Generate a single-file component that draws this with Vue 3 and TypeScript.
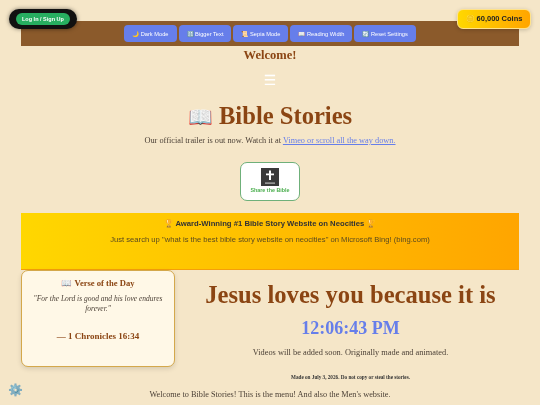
<script setup lang="ts">
import { ref } from 'vue'

const navButtons = ref([
  { icon: '🌙', label: 'Dark Mode' },
  { icon: '🔠', label: 'Bigger Text' },
  { icon: '📜', label: 'Sepia Mode' },
  { icon: '📖', label: 'Reading Width' },
  { icon: '🔄', label: 'Reset Settings' }
])
const clock = ref('12:06:43 PM')
</script>

<template>
  <div class="page">
    <a class="login"><span>Log In / Sign Up</span></a>
    <div class="coins"><span class="coin">🪙</span> 60,000 Coins</div>

    <nav class="nav">
      <button v-for="b in navButtons" :key="b.label" class="nav-btn">{{ b.icon }} {{ b.label }}</button>
    </nav>

    <h3 class="welcome">Welcome!</h3>
    <div class="burger">☰</div>

    <h1 class="title"><span class="book">📖</span> Bible Stories</h1>
    <p class="trailer">Our official trailer is out now. Watch it at <a href="#">Vimeo or scroll all the way down.</a></p>

    <div class="share-wrap">
      <div class="share">
        <svg class="bible" viewBox="0 0 18 18" width="18" height="18">
          <rect width="18" height="18" fill="#3a3a3a" />
          <path d="M8 2.5h2v3h3v1.8h-3V12H8V7.3H5V5.5h3z" fill="#fff" />
          <rect x="4" y="14.5" width="10" height="1.2" fill="#bbb" />
        </svg>
        <span>Share the Bible</span>
      </div>
    </div>

    <section class="award">
      <div class="award-title">🏆 Award-Winning #1 Bible Story Website on Neocities 🏆</div>
      <div class="award-sub">Just search up "what is the best bible story website on neocities" on Microsoft Bing! (bing.com)</div>
    </section>

    <div class="columns">
      <aside class="verse">
        <h4>📖 Verse of the Day</h4>
        <p class="quote">"For the Lord is good and his love endures forever."</p>
        <p class="ref">— 1 Chronicles 16:34</p>
      </aside>
      <div class="main">
        <h2>Jesus loves you because it is</h2>
        <div class="clock">{{ clock }}</div>
        <p class="videos">Videos will be added soon. Originally made and animated.</p>
        <p class="made">Made on July 3, 2026. Do not copy or steal the stories.</p>
      </div>
    </div>

    <p class="menu-line">Welcome to Bible Stories! This is the menu! And also the Men's website.</p>

    <div class="gear">⚙️</div>
  </div>
</template>

<style scoped>
.page {
  position: relative;
  height: 405px;
  overflow: hidden;
  box-sizing: border-box;
  padding: 21px 21px 0;
  background: #f5e6c8;
  font-family: "Liberation Serif", serif;
  color: #4a3f35;
  text-align: center;
  filter: blur(0.35px);
}

.login {
  position: absolute;
  left: 9px;
  top: 9px;
  background: #111;
  border-radius: 20px;
  padding: 4px 7px;
  box-shadow: 0 0 4px rgba(0, 0, 0, 0.5);
  line-height: 0;
}

.login span {
  display: block;
  background: #27ae60;
  color: #fff;
  border-radius: 12px;
  padding: 0 6px;
  font: bold 5.5px/12px "Liberation Sans", sans-serif;
}

.coins {
  position: absolute;
  left: 457px;
  top: 9px;
  width: 74px;
  height: 20px;
  box-sizing: border-box;
  border: 1px solid #ffe28a;
  border-radius: 6px;
  background: linear-gradient(90deg, #ffd700, #ffa500);
  box-shadow: 0 1px 4px rgba(0, 0, 0, 0.2);
  color: #222;
  font: bold 7.5px/18px "Liberation Sans", sans-serif;
  white-space: nowrap;
}

.coin {
  font-size: 7px;
  opacity: 0.6;
}

.nav {
  height: 25px;
  background: #8b5a2b;
  display: flex;
  justify-content: center;
  align-items: center;
  gap: 2px;
}

.nav-btn {
  height: 17px;
  border: none;
  padding: 0 8px;
  border-radius: 4px;
  background: #667eea;
  color: #fff;
  font: 5.7px "Liberation Sans", sans-serif;
  white-space: nowrap;
}

.welcome {
  margin: 1px 0 0;
  font: bold 12.5px/16px "Liberation Serif", serif;
  color: #8b4513;
}

.burger {
  margin-top: 9px;
  color: #fff;
  font: 14px/16px "DejaVu Sans", sans-serif;
}

.title {
  margin: 12px 0 0;
  font: bold 24.6px/32px "Liberation Serif", serif;
  color: #8b4513;
}

.book {
  font-size: 20px;
}

.trailer {
  margin: 1px 0 0;
  font-size: 8.3px;
  line-height: 14px;
}

.trailer a {
  color: #667eea;
}

.share-wrap {
  display: flex;
  justify-content: center;
  margin-top: 14px;
}

.share {
  width: 60px;
  height: 39px;
  box-sizing: border-box;
  border: 1px solid #6fb07a;
  border-radius: 7px;
  background: #fff;
  display: flex;
  flex-direction: column;
  align-items: center;
  padding-top: 5px;
  color: #4caf50;
  font: bold 5.4px/9px "Liberation Sans", sans-serif;
}

.award {
  margin-top: 12px;
  height: 57px;
  box-sizing: border-box;
  border-bottom: 1px solid #f59e0b;
  background: linear-gradient(90deg, #ffd700, #ffa500);
  padding-top: 4px;
  color: #333;
  font-family: "Liberation Sans", sans-serif;
}

.award-title {
  font-size: 7.7px;
  font-weight: bold;
  line-height: 14px;
}

.award-sub {
  margin-top: 2px;
  font-size: 7.65px;
  line-height: 14px;
  color: #5a4a20;
}

.columns {
  display: flex;
  gap: 7px;
}

.verse {
  width: 154px;
  height: 97px;
  box-sizing: border-box;
  flex: none;
  padding: 5px 10px;
  border: 1px solid #d4a84b;
  border-radius: 7px;
  background: #fff8e7;
  box-shadow: 0 2px 5px rgba(0, 0, 0, 0.12);
}

.verse h4 {
  margin: 0;
  font-size: 8.6px;
  line-height: 14px;
  color: #8b4513;
}

.quote {
  margin: 4px 0 0;
  font-size: 7.5px;
  font-style: italic;
  line-height: 10px;
}

.ref {
  margin: 16px 0 0;
  font-size: 9px;
  font-weight: bold;
  line-height: 12px;
  color: #8b4513;
}

.main {
  flex: 1;
}

.main h2 {
  margin: 10px 0 0;
  font: bold 24.6px/30px "Liberation Serif", serif;
  color: #8b4513;
}

.clock {
  margin-top: 5px;
  font: bold 18px/26px "Liberation Serif", serif;
  color: #667eea;
}

.videos {
  margin: 5px 0 0;
  font-size: 8.35px;
  line-height: 14px;
}

.made {
  margin: 12px 0 0;
  font-size: 5.2px;
  font-weight: bold;
  line-height: 10px;
  color: #333;
}

.menu-line {
  margin: 6px 0 0;
  font-size: 8.25px;
  line-height: 14px;
}

.gear {
  position: absolute;
  left: 8px;
  top: 383px;
  font-size: 12px;
  line-height: 14px;
}
</style>
